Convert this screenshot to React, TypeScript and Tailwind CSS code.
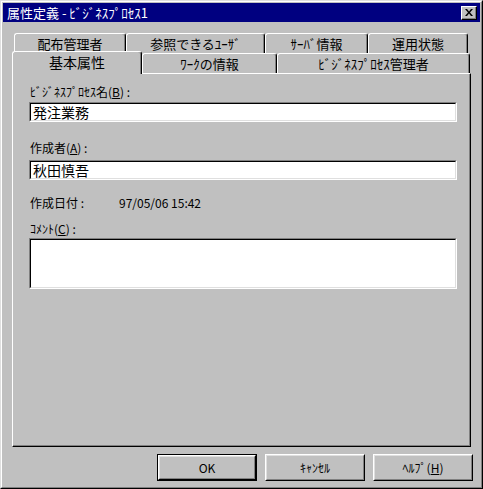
import React from "react";

const font = { fontFamily: '"Noto Sans CJK JP", "Noto Sans", sans-serif' };

function BackTab({ w, children }: { w: string; children: React.ReactNode }) {
  return (
    <div
      className={`${w} h-[20px] border-t border-l border-r border-t-white border-l-white border-r-black rounded-t-[3px] shadow-[inset_-1px_0_0_#808080] flex items-center justify-center text-[13px] leading-[16px] text-black`}
    >
      {children}
    </div>
  );
}

function Field({ h, children }: { h: string; children?: React.ReactNode }) {
  return (
    <div className={`${h} w-[428px] border border-t-[#808080] border-l-[#808080] border-b-white border-r-white`}>
      <div className="h-full border border-t-black border-l-black border-b-[#dfdfdf] border-r-[#dfdfdf] bg-white px-[2px] text-[14px] leading-[17px] text-black">
        {children}
      </div>
    </div>
  );
}

function Btn({ def, children }: { def?: boolean; children: React.ReactNode }) {
  const inner = (
    <div className="h-full border border-t-white border-l-white border-b-black border-r-black">
      <div className="h-full border border-t-[#dfdfdf] border-l-[#dfdfdf] border-b-[#808080] border-r-[#808080] flex items-center justify-center text-[12px] text-black">
        {children}
      </div>
    </div>
  );
  if (def) {
    return <div className="w-[100px] h-[27px] border border-black">{inner}</div>;
  }
  return <div className="w-[100px] h-[27px]">{inner}</div>;
}

export default function App() {
  return (
    <div style={font} className="w-[483px] h-[489px] bg-[#c0c0c0]">
      <div className="w-full h-full border border-t-[#dfdfdf] border-l-[#dfdfdf] border-b-black border-r-black">
        <div className="w-full h-full border border-t-white border-l-white border-b-[#808080] border-r-[#808080] p-[1px] flex flex-col">
          {/* Title bar */}
          <div className="h-[19px] bg-[#000080] flex items-center justify-between pl-[4px] pr-[3px]">
            <span className="text-white text-[13px] leading-[16px] whitespace-nowrap">属性定義 - ﾋﾞｼﾞﾈｽﾌﾟﾛｾｽ1</span>
            <div className="w-[16px] h-[14px] bg-[#c0c0c0] border border-t-white border-l-white border-b-black border-r-black shadow-[inset_-1px_-1px_0_#808080] flex items-center justify-center">
              <svg width="8" height="7" viewBox="0 0 8 7">
                <path d="M0 0h2l2 2.5L6 0h2L5 3.5 8 7H6L4 4.5 2 7H0l3-3.5z" fill="#000" />
              </svg>
            </div>
          </div>

          {/* Tabs */}
          <div className="mt-[11px] pl-[9px]">
            <div className="flex pl-[2px]">
              <BackTab w="w-[112px]">配布管理者</BackTab>
              <BackTab w="w-[139px]">参照できるﾕｰｻﾞ</BackTab>
              <BackTab w="w-[103px]">ｻｰﾊﾞ情報</BackTab>
              <BackTab w="w-[100px]">運用状態</BackTab>
            </div>
            <div className="flex items-end h-[20px]">
              <div className="relative z-10 w-[130px] h-[23px] -mb-[1px] bg-[#c0c0c0] border-t border-l border-r border-t-white border-l-white border-r-black rounded-t-[3px] shadow-[inset_-1px_0_0_#808080] flex items-start justify-center pt-[2px] text-[14px] leading-[17px] text-black">
                基本属性
              </div>
              <BackTab w="w-[135px]">ﾜｰｸの情報</BackTab>
              <BackTab w="w-[193px]">ﾋﾞｼﾞﾈｽﾌﾟﾛｾｽ管理者</BackTab>
            </div>

            {/* Panel */}
            <div className="w-[459px] h-[374px] border border-t-white border-l-white border-b-black border-r-black shadow-[inset_-1px_-1px_0_#808080] pl-[16px] pt-[10px] text-[12px] leading-[16px] text-black">
              <div className="pl-[1px]">
                ﾋﾞｼﾞﾈｽﾌﾟﾛｾｽ名(<u>B</u>) :
              </div>
              <div className="mt-[2px]">
                <Field h="h-[20px]">発注業務</Field>
              </div>
              <div className="mt-[18px] pl-[1px]">
                作成者(<u>A</u>) :
              </div>
              <div className="mt-[4px]">
                <Field h="h-[20px]">秋田慎吾</Field>
              </div>
              <div className="mt-[15px] pl-[1px] flex">
                <span className="w-[89px]">作成日付 :</span>
                <span>97/05/06 15:42</span>
              </div>
              <div className="mt-[10px] pl-[1px]">
                ｺﾒﾝﾄ(<u>C</u>) :
              </div>
              <div className="mt-[1px]">
                <Field h="h-[51px]" />
              </div>
            </div>
          </div>

          {/* Buttons */}
          <div className="mt-[7px] flex justify-end gap-[8px] pr-[7px]">
            <Btn def>OK</Btn>
            <Btn>ｷｬﾝｾﾙ</Btn>
            <Btn>
              ﾍﾙﾌﾟ(<u>H</u>)
            </Btn>
          </div>
        </div>
      </div>
    </div>
  );
}
